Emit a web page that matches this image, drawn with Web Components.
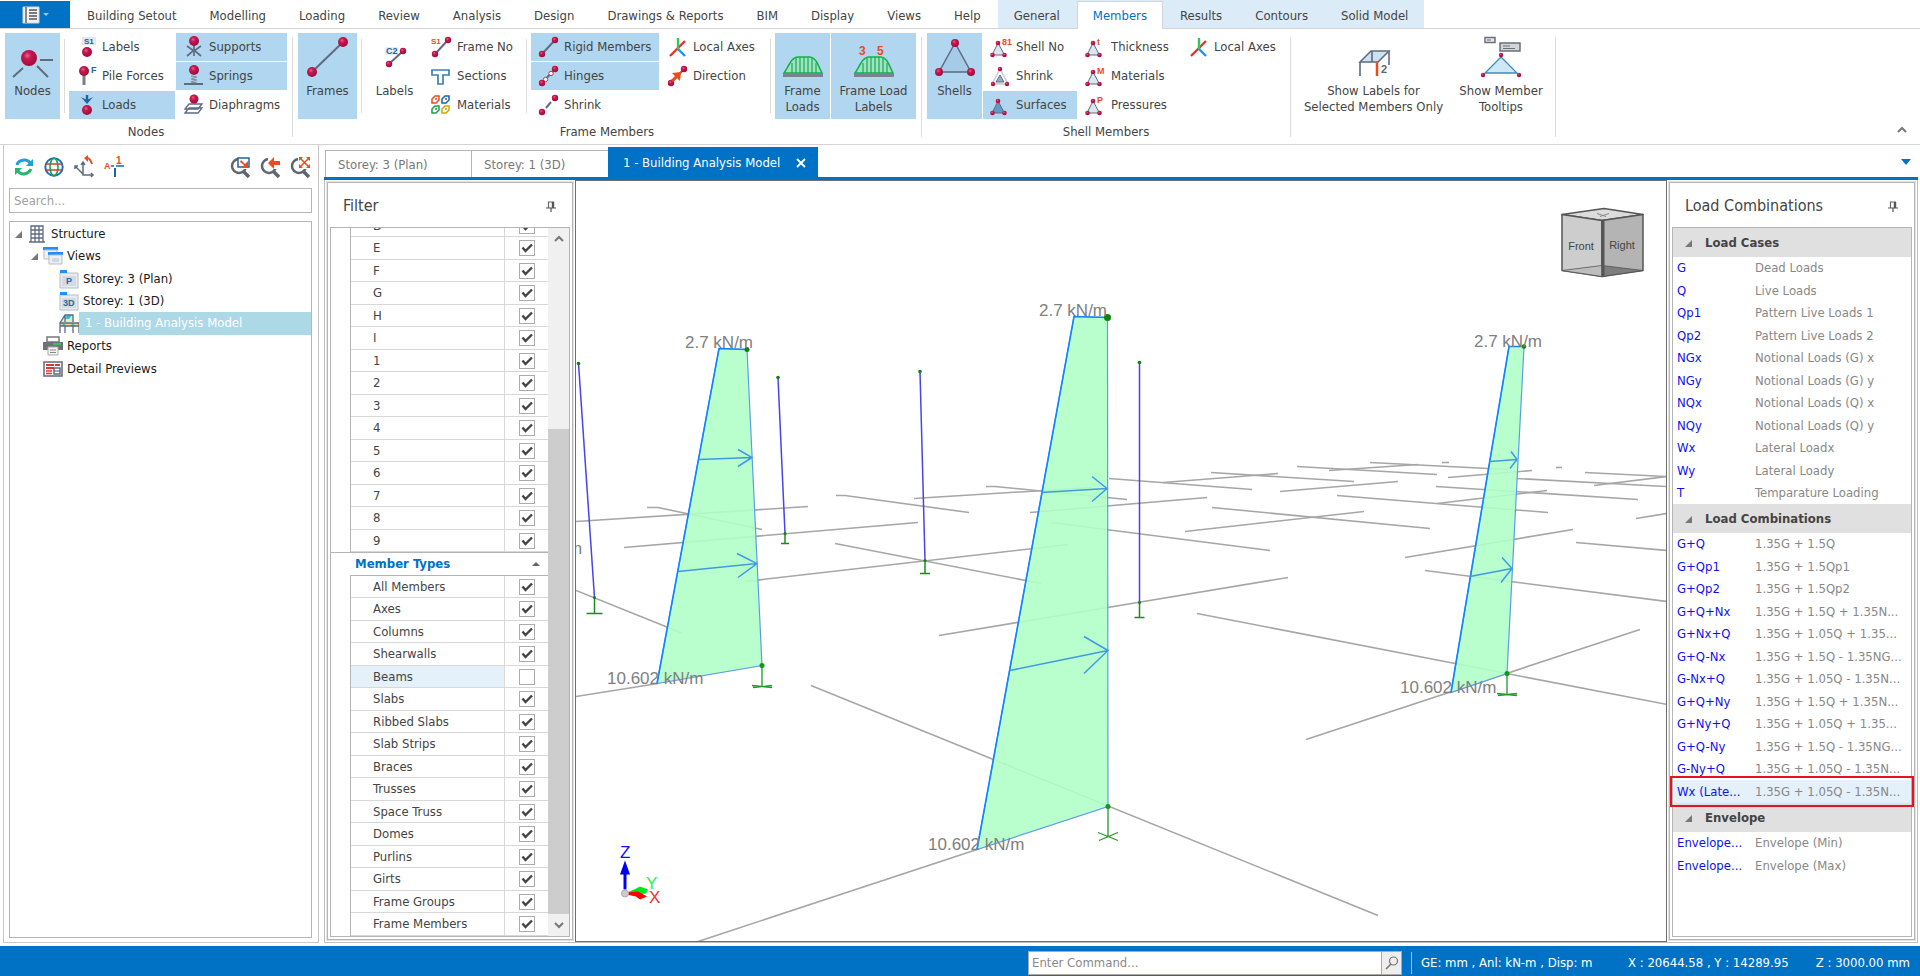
<!DOCTYPE html>
<html lang="en">
<head>
<meta charset="utf-8">
<title>Building Analysis Model</title>
<style>
html, body { margin: 0; height: 100%; }
body { font: 13px/16px "DejaVu Sans Condensed", "DejaVu Sans", sans-serif; color: #444; background: #fff; }
</style>
</head>
<body>
<analysis-app></analysis-app>
<script>
/* ---------- shared helpers ---------- */
const define = (name, render) => customElements.define(name, class extends HTMLElement {
  connectedCallback() {
    if (this.shadowRoot) return;
    const t = document.createElement('template');
    t.innerHTML = render(this);
    this.attachShadow({ mode: 'open' }).append(t.content.cloneNode(true));
  }
});

const RESET = `
  *, *::before { box-sizing: border-box; }
  button, input { font: inherit; color: inherit; background: none; border: 0; padding: 0; margin: 0; border-radius: 0; }
  ul, h2, h3 { margin: 0; padding: 0; list-style: none; font: inherit; }
  a { color: inherit; text-decoration: none; }`;

/* ---------- icons ---------- */
const ball = (x, y, r) => `<circle cx="${x}" cy="${y}" r="${r}" fill="url(#ball)"/>`;
const line = (d, c = '#5f6b80', w = 2) => `<path d="${d}" fill="none" stroke="${c}" stroke-width="${w}"/>`;
const mark = (x, y, t, c = '#f04a1a', s = 9) => `<text x="${x}" y="${y}" font-size="${s}" font-weight="bold" font-family="Liberation Sans, sans-serif" fill="${c}">${t}</text>`;
const member = mid => mid + ball(4, 17, 3.2) + ball(17, 3, 3.2);
const triangle = (fill, t) => `<path d="M8 6L2 18H14.500Z" fill="${fill}" stroke="#5f6b80"/>` + ball(8, 6, 2.3) + ball(2.500, 18, 2.300) + ball(14.500, 18, 2.300) + (t ? mark(12, 8, t) : '');
const loadShape = `<path d="M5 38C9 33 12 22 19 22H31C38 23 39 31 43 38Z" fill="#a4e0c4" stroke="#12b04e" stroke-width="1.500"/>` + line('M13 28V38M17 23V38M21 22V38M25 22V38M29 22V38M33 23V38M37 28V38', '#12b04e', 1.2) + `<path d="M4 38H44V42H4Z" fill="#7b8391"/>`;
const lens = extra => `<circle cx="9" cy="9" r="7" fill="#fff" stroke="#5f666d" stroke-width="2.500"/>` + line('M13 14L19 20', '#5f666d', 3.5) + `<path d="M8 0H21V12H8Z" fill="#fff"/>` + extra;
const windowIcon = t => `<path d="M1 4H19V19H1Z" fill="#e8ecf0" stroke="#b7bdc4"/><path d="M1 1H8V4H1Z" fill="#1e90ff"/><path d="M3 7H17V17H3Z" fill="#d3dae2"/>` + mark(t.length > 1 ? 4 : 7, 15, t, '#2f6798', 9);

const ICONS = {
  nodes: [48, line('M31 25H44M14 33L4 42M28 31L39 42') + ball(20, 23, 8)],
  frames: [48, line('M8 37L39 7') + ball(8, 37, 5) + ball(39, 7, 5)],
  memberLabels: [48, `<path d="M14 12H27V20H14Z" fill="#e9edf2"/>` + line('M18 29L32 16') + ball(18, 29, 3.2) + ball(32, 16, 3.2) + mark(15, 19, 'C2', '#1d64a0')],
  frameLoads: [48, loadShape],
  frameLoadLabels: [48, loadShape + mark(9, 20, '3', '#f04a1a', 12) + mark(27, 20, '5', '#f04a1a', 12)],
  shells: [48, `<path d="M24 8L8 37H40Z" fill="#a6cbe8" stroke="#5f6b80" stroke-width="1.500"/>` + ball(24, 8, 4) + ball(8, 37, 4) + ball(40, 37, 4)],
  selectedLabels: [48, `<path d="M21 16H39L28 27H10Z" fill="#cfe0f0" stroke="#5f6b80" stroke-width="1.500"/>` + line('M10 27V41M22 16V27M39 16V30', '#5f6b80', 1.6) + line('M27 27V41', '#f04a1a', 2.5) + mark(31, 38, '2', '#666', 11)],
  tooltips: [48, `<path d="M8 2.500H18V7.500H8Z" fill="#e2e4e7" stroke="#6b7078" stroke-width="1.500"/><path d="M23 8H43V16H23Z" fill="#d2d5d9" stroke="#6b7078" stroke-width="1.500"/>` + line('M10 5H14M26 11H33M26 13.500H38', '#6b7078', 1.2) + `<path d="M24 22L8 38H40Z" fill="#cfe7f6" stroke="#3a8fb7" stroke-width="1.300"/>` + ball(24, 20, 2.2) + ball(6, 40, 2.2) + ball(42, 40, 2.2)],
  nodeLabels: [20, `<path d="M6 0H20V8H6Z" fill="#e4e7eb"/>` + mark(8, 7, 'S1', '#1d64a0', 8) + ball(11, 15, 5)],
  pile: [20, line('M8 9V19', '#77808f', 3) + ball(8, 5, 5) + mark(15, 7, 'F', '#1d64a0')],
  loads: [20, line('M11 0V6', '#1d64a0', 2.5) + `<path d="M5 2L11 5L17 2L11 9Z" fill="#1d64a0"/>` + ball(11, 15, 5)],
  supports: [20, line('M4 9L11 14L18 9M4 19L11 13L18 19M11 8V19', '#5f6b80', 1.7) + ball(11, 4, 5)],
  springs: [20, line('M8 10L14 11L8 13L14 14L8 16L14 17', '#7d8899', 1.2) + line('M1 18H20') + ball(11, 4, 5)],
  diaphragms: [20, `<path d="M2 18L6 13H19L15 18ZM2 14L6 9H19L15 14Z" fill="#fff" stroke="#5f6b80" stroke-width="1.300"/>` + ball(11, 4, 4.5)],
  frameNo: [20, member(line('M4 17L17 3')) + mark(0, 7, 'S1', '#f04a1a', 8)],
  sections: [20, `<path d="M1 4H18V9H12V18H7V9H1Z" fill="#fff" stroke="#3f7fae" stroke-width="1.700"/>`],
  materials: [20, [['#f04a1a', 0, 0], ['#1d64a0', 10, 0], ['#17a34a', 0, 10], ['#d9a400', 10, 10]].map(([c, x, y]) => `<path transform="translate(${x} ${y})" d="M1 4L4 1H8L8 5L5 8H1Z M4 4H6" fill="#fff" stroke="${c}" stroke-width="1.500"/>`).join('')],
  rigid: [20, member(line('M4 17L17 3'))],
  hinges: [20, member(line('M4 17L17 3') + `<circle cx="7.500" cy="13.500" r="2.200" fill="#fff" stroke="#c73560"/><circle cx="13" cy="7.500" r="2.200" fill="#fff" stroke="#c73560"/>`)],
  shrink: [20, member(line('M8 13L13 7'))],
  axes: [20, line('M3 19L18 4', '#e8322c', 2.4) + line('M11 12L18 19', '#1e90ff', 2.4) + line('M11 1V12', '#35c65a', 2.4)],
  direction: [20, member(line('M4 17L17 3')) + `<path d="M5 7L14 6L13 15L10 12L6 16L4 14L8 10Z" fill="#f04a1a"/>`],
  shellNo: [20, triangle('#dde6ef', '81')],
  thickness: [20, triangle('#dde6ef', 't')],
  shellMaterials: [20, triangle('#dde6ef', 'M')],
  pressures: [20, triangle('#dde6ef', 'P')],
  surfaces: [20, triangle('#5f9bc4', '')],
  shellShrink: [20, `<path d="M10 3L2 18H18Z" fill="#fff" stroke="#c5cad2" stroke-width="1.500"/><path d="M10 9L6 16H14Z" fill="#8fb0cc" stroke="#5f6b80"/>` + ball(10, 3, 2.2) + ball(3, 18, 2.2) + ball(17, 18, 2.2)],
  menu: [20, `<path d="M2 2H18V18H2Z" fill="#f2f2f2" stroke="#d5d5d5"/>` + line('M5 2V18', '#666', 1.5) + line('M8 5H16M8 8H16M8 11H16M8 14H16', '#555', 1.4)],
  refresh: [20, line('M3 8C4 3 13 1 16 6', '#1ea0dc', 3) + `<path d="M19 2V9H12Z" fill="#1ea0dc"/>` + line('M17 12C15 17 7 19 4 14', '#27b573', 3) + `<path d="M1 18V11H8Z" fill="#27b573"/>`],
  globe: [20, `<circle cx="10" cy="10" r="8.700" fill="#fff" stroke="#1d6fb8" stroke-width="2"/>` + line('M2 7H18M2 13H18', '#e8322c', 1.6) + `<ellipse cx="10" cy="10" rx="4" ry="8.700" fill="none" stroke="#17a34a" stroke-width="1.600"/>`],
  rotate: [20, line('M9 6V18H19M9 17L1 9M7 8L9 5L11 8M17 16L19 18L17 20M1 12V9H4', '#5f6b80', 1.5) + line('M13 1C16 1 17 4 18 7', '#f04a1a', 2) + `<path d="M14 -2V5L10 1Z" fill="#f04a1a"/>`],
  axisLabels: [20, mark(0, 12, 'A', '#f04a1a', 9) + mark(12, 7, '1', '#f04a1a', 10) + line('M7 9H10M12 9H20', '#1d64a0', 1.3) + line('M11 11V20', '#1d64a0', 2)],
  zoomWindow: [20, lens(`<path d="M8 1H19V10H8Z" fill="#fff" stroke="#1d64a0" stroke-width="1.500"/><path d="M11 3L15 7L18 4V11H12L14 8L10 5Z" fill="#f04a1a"/>`)],
  zoomBack: [20, lens(`<path d="M8 6L14 0V4H20V8H14V12Z" fill="#f04a1a"/>`)],
  zoomExtents: [20, lens(line('M10 1L19 10M19 1L10 10', '#f04a1a', 1.5) + `<path d="M9 0H13L9 4ZM20 0V4L16 0ZM9 11V7L13 11ZM20 11H16L20 7Z" fill="#f04a1a"/>`)],
  building: [20, line('M4 18V2H16V18M8 2V18M12 2V18M4 6H16M4 10H16M4 14H16M2 18H18', '#5f6b80', 1.3)],
  views: [20, `<path d="M0 1H15V4H0Z" fill="#1e90ff"/><path d="M1 4H14V13H1Z" fill="#eef0f2" stroke="#b7bdc4"/><path d="M5 6H20V9H5Z" fill="#1e90ff"/><path d="M6 9H19V18H6Z" fill="#eef0f2" stroke="#b7bdc4"/><path d="M9 12H16V16H9Z" fill="#d5d8db"/>`],
  plan: [20, windowIcon('P')],
  threeD: [20, windowIcon('3D')],
  model: [20, `<path d="M6 1H15V8H2Z" fill="#d9f0c8"/><path d="M8 1H13L10 5H6Z" fill="#39b8e8"/><path d="M1 9H20V12H1Z" fill="#f6d27c"/><path d="M4 9L8 12H3ZM13 9L17 12H12Z" fill="#39b8e8"/>` + line('M1 19V9L6 1H14V8M1 9H20V19M6 12V19M14 12V19M1 12H20M6 1V8', '#5f6b80', 1.3)],
  printer: [20, `<path d="M4 1H16V6H4Z" fill="#fff" stroke="#777" stroke-width="1.500"/><path d="M0 6H20V14H0Z" fill="#6d7278"/><path d="M10 7H18V9H10Z" fill="#3fbf5a"/><path d="M5 11H15V19H5Z" fill="#f4f4f4" stroke="#aaa"/>` + line('M7 14H13M7 16.500H13', '#888', 1.2)],
  preview: [20, `<path d="M1 3H19V17H1Z" fill="#fff" stroke="#5f6b80" stroke-width="1.500"/>` + line('M3 6H11M3 9H11M12 6H17', '#e8322c', 2) + line('M3 12H9M3 14.500H9', '#e8322c', 1.5) + `<path d="M11 9H17V15H11Z" fill="none" stroke="#5f6b80" stroke-width="1.500"/>` + line('M11 12H17', '#5f6b80', 1.2)],
  pin: [10, line('M2.500 7V1H8', '#666', 1.2) + line('M7 1V7', '#555', 2.4) + line('M0 7H10M5 7V11', '#555', 1.2)],
  search: [16, `<circle cx="9.500" cy="6" r="4" fill="none" stroke="#777" stroke-width="1.200"/>` + line('M7 9L2 14', '#777', 1.6)],
  chevronUp: [12, line('M2 8L6 4L10 8', '#777', 2)],
  chevronDown: [12, line('M2 4L6 8L10 4', '#777', 2)],
  collapse: [10, `<path d="M8 2V9H1Z" fill="#777"/>`],
  triUp: [10, `<path d="M1 7L5 3L9 7Z" fill="#666"/>`],
  triDown: [10, `<path d="M0 2H10L5 8Z" fill="#0072c6"/>`],
  close: [10, line('M1 1L9 9M9 1L1 9', '#fff', 1.8)]
};

define('app-icon', el => {
  const [size, body] = ICONS[el.getAttribute('name')];
  return `<style>:host { display: block; flex: none; width: ${size}px; height: ${size}px; } svg { display: block; overflow: visible; }</style>
  <svg width="${size}" height="${size}" viewBox="0 0 ${size} ${size}" aria-hidden="true">
  <defs><radialGradient id="ball" cx=".4" cy=".35" r=".65"><stop offset="0" stop-color="#e2668c"/><stop offset=".35" stop-color="#c5184f"/><stop offset="1" stop-color="#a30a3c"/></radialGradient></defs>${body}</svg>`;
});

/* ---------- ribbon ---------- */
define('ribbon-tabs', () => {
  const plain = ['Building Setout', 'Modelling', 'Loading', 'Review', 'Analysis', 'Design', 'Drawings &amp; Reports', 'BIM', 'Display', 'Views', 'Help'];
  const context = ['General', 'Members', 'Results', 'Contours', 'Solid Model'];
  return `<style>${RESET}
  :host { display: block; box-sizing: border-box; border-bottom: 1px solid #d4d4d4; height: 29px; }
  nav, .ctx { display: flex; gap: 1px; height: 28px; }
  button { width: 70px; height: 27px; margin-top: 1px; background: #0072c6; display: flex; align-items: center; justify-content: center; gap: 2px; }
  button i { border: 3px solid transparent; border-top: 3px solid #9cc8e8; margin-top: 3px; }
  a { padding: 8px 16px 0; height: 28px; white-space: nowrap; }
  .on { background: #fff; color: #0072c6; margin-top: 1px; padding: 6px 15px 0; border: 1px solid #d4d4d4; border-bottom: 0; }
  .ctx { background: #dcebf8; }
  </style>
  <nav><button aria-label="File menu"><app-icon name="menu"></app-icon><i></i></button>
  ${plain.map(t => `<a href="#">${t}</a>`).join('')}
  <div class="ctx">${context.map(t => `<a href="#"${t === 'Members' ? ' class="on"' : ''}>${t}</a>`).join('')}</div></nav>`;
});

define('ribbon-button', el => {
  const large = el.hasAttribute('large');
  return `<style>${RESET}
  :host { display: block; }
  button { width: 100%; height: 100%; display: flex; white-space: nowrap; text-align: left; }
  .small { align-items: center; gap: 6px; padding: 0 7px; height: 28px; }
  .large { flex-direction: column; align-items: center; padding-top: 2px; text-align: center; }
  .pressed { background: #b1d6f0; }
  </style>
  <button class="${large ? 'large' : 'small'}${el.hasAttribute('pressed') ? ' pressed' : ''}"><app-icon name="${el.getAttribute('icon')}"></app-icon><span><slot></slot></span></button>`;
});

define('ribbon-group', el => `<style>${RESET}
  :host { display: flex; flex-direction: column; position: relative; padding: 4px 6px 0 5px; }
  :host::after { content: ""; position: absolute; right: 0; top: 8px; bottom: 7px; width: 1px; background: #dcdcdc; }
  .items { display: flex; gap: 1px; height: 86px; }
  .caption { text-align: center; padding-top: 5px; height: 25px; }
  ::slotted(.col) { display: grid; grid-auto-rows: 28px; row-gap: 1px; }
  ::slotted(.sep) { width: 1px; background: #dcdcdc; margin: 6px 3px; }
  </style><div class="items"><slot></slot></div><div class="caption">${el.getAttribute('caption') || ''}</div>`);

define('ribbon-bar', () => {
  const large = (icon, text, w, on = true) => `<ribbon-button large ${on ? 'pressed' : ''} icon="${icon}" style="width:${w}px">${text}</ribbon-button>`;
  const col = (w, ...items) => `<div class="col" style="width:${w}px">${items.map(([icon, text, on]) => `<ribbon-button icon="${icon}" ${on ? 'pressed' : ''}>${text}</ribbon-button>`).join('')}</div>`;
  const sep = '<div class="sep"></div>';
  return `<style>${RESET}
  :host { display: flex; box-sizing: border-box; height: 116px; border-bottom: 1px solid #d4d4d4; }
  .fold { margin-left: auto; align-self: flex-end; padding: 0 12px 8px 0; }
  </style>
  <ribbon-group caption="Nodes">
    ${large('nodes', 'Nodes', 55)}${sep}
    ${col(106, ['nodeLabels', 'Labels'], ['pile', 'Pile Forces'], ['loads', 'Loads', 1])}
    ${col(111, ['supports', 'Supports', 1], ['springs', 'Springs', 1], ['diaphragms', 'Diaphragms'])}
  </ribbon-group>
  <ribbon-group caption="Frame Members">
    ${large('frames', 'Frames', 59)}${sep}
    ${large('memberLabels', 'Labels', 57, false)}
    ${col(98, ['frameNo', 'Frame No'], ['sections', 'Sections'], ['materials', 'Materials'])}${sep}
    ${col(128, ['rigid', 'Rigid Members', 1], ['hinges', 'Hinges', 1], ['shrink', 'Shrink'])}
    ${col(106, ['axes', 'Local Axes'], ['direction', 'Direction'])}${sep}
    ${large('frameLoads', 'Frame<br>Loads', 55)}${large('frameLoadLabels', 'Frame Load<br>Labels', 85)}
  </ribbon-group>
  <ribbon-group caption="Shell Members">
    ${large('shells', 'Shells', 55)}
    ${col(94, ['shellNo', 'Shell No'], ['shellShrink', 'Shrink'], ['surfaces', 'Surfaces', 1])}
    ${col(102, ['thickness', 'Thickness'], ['shellMaterials', 'Materials'], ['pressures', 'Pressures'])}
    ${col(104, ['axes', 'Local Axes'])}
  </ribbon-group>
  <ribbon-group>
    ${large('selectedLabels', 'Show Labels for<br>Selected Members Only', 155, false)}
    ${large('tooltips', 'Show Member<br>Tooltips', 98, false)}
  </ribbon-group>
  <button class="fold" aria-label="Collapse ribbon"><app-icon name="chevronUp"></app-icon></button>`;
});

/* ---------- project explorer ---------- */
define('explorer-panel', () => {
  const tree = [[0, 'building', 'Structure', 1], [1, 'views', 'Views', 1], [2, 'plan', 'Storey: 3 (Plan)'], [2, 'threeD', 'Storey: 1 (3D)'], [2, 'model', '1 - Building Analysis Model'], [1, 'printer', 'Reports'], [1, 'preview', 'Detail Previews']];
  const tools = ns => ns.map(n => `<button aria-label="${n}"><app-icon name="${n}"></app-icon></button>`).join('');
  return `<style>${RESET}
  :host { display: flex; flex-direction: column; box-sizing: border-box; width: 316px; border: 1px solid #c8c8c8; border-top: 0; padding: 12px 6px 4px 5px; }
  .tools { display: flex; gap: 10px; padding: 0 2px 0 5px; height: 31px; }
  .tools .gap { flex: 1; }
  .tools button { height: 20px; }
  input { width: 100%; height: 25px; border: 1px solid #b5b5b5; padding: 0 4px; margin-bottom: 8px; }
  input::placeholder { color: #a0a0a0; opacity: 1; }
  ul { flex: 1; border: 1px solid #b5b5b5; color: #1a1a1a; }
  li { display: flex; align-items: center; height: 23px; padding-left: calc(4px + 16px * var(--level)); }
  li:nth-child(even) { height: 22px; }
  .toggle { width: 13px; display: flex; }
  li span { flex: 1; padding-left: 4px; }
  .sel span { background: #add8e6; color: #fff; align-self: stretch; line-height: 22px; padding-left: 6px; }
  </style>
  <div class="tools">${tools(['refresh', 'globe', 'rotate', 'axisLabels'])}<span class="gap"></span>${tools(['zoomWindow', 'zoomBack', 'zoomExtents'])}</div>
  <input type="text" placeholder="Search..." aria-label="Search">
  <ul>${tree.map(([l, i, t, open]) => `<li style="--level:${l}"${i === 'model' ? ' class="sel"' : ''}><div class="toggle">${open ? '<app-icon name="collapse"></app-icon>' : ''}</div><app-icon name="${i}"></app-icon><span>${t}</span></li>`).join('')}</ul>`;
});

/* ---------- document area ---------- */
define('doc-tabs', () => `<style>${RESET}
  :host { display: flex; align-items: flex-end; height: 35px; border-bottom: 3px solid #0072c6; color: #777; padding-left: 1px; box-sizing: border-box; }
  a { height: 27px; padding: 6px 12px 0; width: 147px; border: 1px solid #b5b5b5; border-bottom: 0; white-space: nowrap; }
  a + a { border-left: 0; width: 136px; border-right: 0; }
  a + .on { background: #0072c6; color: #fff; height: 30px; width: 210px; padding: 8px 12px 0 15px; border: 0; display: flex; justify-content: space-between; }
  .on app-icon { margin-top: 3px; }
  button { margin: 0 7px 10px auto; }
  </style>
  <a href="#">Storey: 3 (Plan)</a><a href="#">Storey: 1 (3D)</a><a href="#" class="on"><span>1 - Building Analysis Model</span><app-icon name="close"></app-icon></a>
  <button aria-label="Open views"><app-icon name="triDown"></app-icon></button>`);

define('dock-panel', el => `<style>${RESET}
  :host { display: flex; flex-direction: column; box-sizing: border-box; width: 246px; margin: 2px 0; border: 1px solid #b5b5b5; padding: 2px; min-height: 0; outline: 1px solid #e2e2e2; }
  header { display: flex; align-items: center; justify-content: space-between; height: 42px; flex: none; padding: 0 14px 0 13px; }
  h2 { font-size: 16px; line-height: 20px; }
  .body { flex: 1; min-height: 0; border: 1px solid #b5b5b5; display: flex; flex-direction: column; }
  </style>
  <header><h2>${el.getAttribute('heading')}</h2><button aria-label="Pin panel"><app-icon name="pin"></app-icon></button></header>
  <div class="body"><slot></slot></div>`);

define('filter-list', () => {
  const axes = ['D', 'E', 'F', 'G', 'H', 'I', '1', '2', '3', '4', '5', '6', '7', '8', '9'];
  const types = ['All Members', 'Axes', 'Columns', 'Shearwalls', 'Beams', 'Slabs', 'Ribbed Slabs', 'Slab Strips', 'Braces', 'Trusses', 'Space Truss', 'Domes', 'Purlins', 'Girts', 'Frame Groups', 'Frame Members'];
  const row = t => `<tr${t === 'Beams' ? ' class="hot"' : ''}><th scope="row"><label for="f-${t}">${t}</label></th><td><input type="checkbox" id="f-${t}"${t === 'Beams' ? '' : ' checked'}></td></tr>`;
  return `<style>${RESET}
  :host { display: flex; flex: 1; min-height: 0; overflow: hidden; }
  .view { flex: 1; min-height: 0; display: flex; flex-direction: column; justify-content: flex-end; overflow: hidden; }
  table { flex: none; border-collapse: separate; border-spacing: 0; table-layout: fixed; margin-left: 19px; width: calc(100% - 19px); border-left: 1px solid #b5b5b5; }
  tr { height: 23px; }
  tr:nth-child(odd) { height: 22px; }
  th, td { padding: 0; border-bottom: 1px solid #d8d8d8; font-weight: normal; text-align: left; line-height: 16px; }
  th { padding-left: 22px; }
  td { width: 44px; border-left: 1px solid #d8d8d8; text-align: center; }
  .hot th { background: #e4f0fa; }
  input { appearance: none; width: 16px; height: 16px; border: 1px solid #ababab; display: block; margin: 0 auto; background: #fff; }
  input:checked { background: #fff url('data:image/svg+xml,<svg xmlns="http://www.w3.org/2000/svg" width="14" height="14"><path d="M2.500 6.500L5.500 10L12 3.500" fill="none" stroke="%23444" stroke-width="2.400"/></svg>'); }
  h3 { flex: none; display: flex; align-items: center; justify-content: space-between; height: 23px; padding: 0 7px 0 24px; font-weight: bold; color: #0072c6; border-top: 1px solid #b5b5b5; }
  h3 + table { border-top: 1px solid #b5b5b5; }
  .bar { width: 21px; display: flex; flex-direction: column; background: #f0f0f0; }
  .bar button { height: 22px; display: flex; align-items: center; justify-content: center; }
  .room { flex: 179; } .thumb { flex: 485; background: #cdcdcd; }
  </style>
  <div class="view"><table><tbody>${axes.map(row).join('')}</tbody></table>
  <h3>Member Types<app-icon name="triUp"></app-icon></h3>
  <table><tbody>${types.map(row).join('')}</tbody></table></div>
  <div class="bar"><button aria-label="Scroll up"><app-icon name="chevronUp"></app-icon></button><div class="room"></div><div class="thumb"></div><button aria-label="Scroll down"><app-icon name="chevronDown"></app-icon></button></div>`;
});

define('load-list', () => {
  const groups = [
    ['Load Cases', [['G', 'Dead Loads'], ['Q', 'Live Loads'], ['Qp1', 'Pattern Live Loads 1'], ['Qp2', 'Pattern Live Loads 2'], ['NGx', 'Notional Loads (G) x'], ['NGy', 'Notional Loads (G) y'], ['NQx', 'Notional Loads (Q) x'], ['NQy', 'Notional Loads (Q) y'], ['Wx', 'Lateral Loadx'], ['Wy', 'Lateral Loady'], ['T', 'Temparature Loading']]],
    ['Load Combinations', [['G+Q', '1.35G + 1.5Q'], ['G+Qp1', '1.35G + 1.5Qp1'], ['G+Qp2', '1.35G + 1.5Qp2'], ['G+Q+Nx', '1.35G + 1.5Q + 1.35N...'], ['G+Nx+Q', '1.35G + 1.05Q + 1.35...'], ['G+Q-Nx', '1.35G + 1.5Q - 1.35NG...'], ['G-Nx+Q', '1.35G + 1.05Q - 1.35N...'], ['G+Q+Ny', '1.35G + 1.5Q + 1.35N...'], ['G+Ny+Q', '1.35G + 1.05Q + 1.35...'], ['G+Q-Ny', '1.35G + 1.5Q - 1.35NG...'], ['G-Ny+Q', '1.35G + 1.05Q - 1.35N...'], ['Wx (Late...', '1.35G + 1.05Q - 1.35N...']]],
    ['Envelope', [['Envelope...', 'Envelope (Min)'], ['Envelope...', 'Envelope (Max)']]]
  ];
  return `<style>${RESET}
  :host { display: block; }
  h3 { display: flex; align-items: center; gap: 11px; height: 29px; padding-left: 11px; background: #e0e0e0; font-weight: bold; }
  table { width: 100%; border-collapse: separate; border-spacing: 0; table-layout: fixed; }
  tr { height: 22px; }
  tr:nth-child(even) { height: 23px; }
  td, th { padding: 0; white-space: nowrap; font-weight: normal; text-align: left; }
  th { width: 82px; padding-left: 4px; color: #1010ee; }
  td { color: #888; }
  .picked { position: relative; background: #e4f0fa; }
  .picked th::after { content: ""; position: absolute; inset: -4px -3px; border: 2px solid #e81123; }
  </style>
  ${groups.map(([name, rows]) => `<h3><app-icon name="collapse"></app-icon>${name}</h3><table><tbody>${rows.map(([a, b]) => `<tr${a.startsWith('Wx (') ? ' class="picked"' : ''}><th scope="row">${a}</th><td>${b}</td></tr>`).join('')}</tbody></table>`).join('')}`;
});

/* ---------- 3D view ---------- */
define('model-view', () => {
  const grid = ['576 521 808 506', '647 507 658 507 762 529', '624 547 918 522', '836 495 845 495 969 512', '835 543 1041 583', '745 581 1068 544', '914 498 1092 487', '986 486 995 486 1127 499', '1030 512 1207 497', '1051 522 1270 550', '939 635 1288 577', '576 590 683 633', '576 696 658 683', '811 685 1378 915', '698 941 977 849', '1109 478 1252 489', '1163 482 1278 473', '1211 472 1354 481', '1280 491 1398 481', '1297 466 1437 474', '1329 470 1418 464', '1370 462 1508 469', '1442 462 1449 462', '1448 477 1532 470', '1556 467 1562 467', '1585 472 1667 476', '1516 478 1667 486', '1594 485 1667 476', '1436 486 1638 499', '1437 503 1547 490', '1337 495 1548 512', '1212 507 1430 528', '1185 531 1364 511', '1405 557 1573 529', '1636 518 1667 513', '1576 542 1667 550', '1425 570 1667 601', '1197 613 1667 704', '1306 739 1640 629'];
  const posts = [[578.5, 363, 594.5, 597, 613, 8], [778, 377, 785, 533, 543, 4], [920, 371, 925, 560, 573, 5], [1139.5, 362, 1139.5, 602, 617, 5]];
  const walls = [
    { s: '719 348 747 349 762 665 657 683', arrows: ['699 459 752 457M738 449L752 457L738 466', '678 571 757 563M737 553L757 563L738 577'], top: [747, 349, 2.5], foot: [762, 665, 686, 1] },
    { s: '1074 316 1107.500 317 1108 806 977 849', arrows: ['1041 492 1107 488M1092 476L1107 488L1092 501', '1010 670 1108 650M1084 636L1108 650L1084 673'], top: [1107.5, 317, 3.5], foot: [1108, 806, 836, 4] },
    { s: '1509 346 1524 346 1507 673 1451 692', arrows: ['1490 461 1517 459M1511 451L1517 459L1510 468', '1470 576 1512 568M1502 557L1512 568L1501 582'], top: [1524, 346, 2.2], foot: [1507, 673, 694, 1] }
  ];
  const label = (x, y, t, c = '#808080') => `<text x="${x}" y="${y}" fill="${c}">${t}</text>`;
  return `<style>
  :host { display: block; position: relative; flex: 1; min-width: 0; border: 1px solid #6e6e6e; background: #fff; overflow: hidden; }
  svg { position: absolute; inset: 0; width: 100%; height: 100%; font: 17px "Liberation Sans", Arial, sans-serif; }
  .cube text { font-size: 11px; fill: #444; text-anchor: middle; }
  </style>
  <svg viewBox="576 180 1090 761" preserveAspectRatio="xMidYMid slice" role="img" aria-label="Building analysis model">
  <g fill="none" stroke="#a6a6a6" stroke-width="1.600">${grid.map(p => `<polyline points="${p}"/>`).join('')}</g>
  <g fill="none">${posts.map(([x1, y1, x2, y2, y3, r]) => `<path d="M${x1} ${y1}L${x2} ${y2}" stroke="#4a42ea" stroke-width="1.500"/><path d="M${x2} ${y2}V${y3}M${x2 - r} ${y3}H${x2 + r}" stroke="#1d8a1d" stroke-width="1.500"/><circle cx="${x1}" cy="${y1}" r="1.800" fill="#118011"/><circle cx="${x2}" cy="${y2}" r="1.500" fill="#118011"/>`).join('')}</g>
  ${label(568, 553, 'm')}
  ${walls.map(w => {
    const p = w.s.split(' ');
    const [fx, fy, by, d] = w.foot;
    return `<polygon points="${w.s}" fill="#b0ffc8" fill-opacity=".9" stroke="#5c9cf0" stroke-width="1.200"/>
    <path d="M${p[2]} ${p[3]}L${p[0]} ${p[1]}L${p[6]} ${p[7]}" fill="none" stroke="#1284ff" stroke-width="1.600"/>
    ${w.arrows.map(a => `<path d="M${a}" fill="none" stroke="#3f9ae6" stroke-width="1.500"/>`).join('')}
    <path d="M${fx} ${fy}V${by}M${fx - 9} ${by + d}L${fx + 10} ${by - d}M${fx - 10} ${by - d}L${fx + 10} ${by + d}" stroke="#1f9a2a" stroke-width="1.300" fill="none"/>
    <circle cx="${w.top[0]}" cy="${w.top[1]}" r="${w.top[2]}" fill="#0c830c"/><circle cx="${fx}" cy="${fy}" r="2.500" fill="#0f9a1a"/>`;
  }).join('')}
  ${label(685, 347, '2.7 kN/m')}${label(1039, 315, '2.7 kN/m')}${label(1474, 346, '2.7 kN/m')}
  ${label(607, 683, '10.602 kN/m')}${label(928, 849, '10.602 kN/m')}${label(1400, 692, '10.602 kN/m')}
  <path d="M625 889V868" stroke="#0000f0" stroke-width="3"/><path d="M625 860L630 874H620Z" fill="#0000f0"/>
  <path d="M627 892L634 889L640 886L648 889L646 893L636 894Z" fill="#00e81c"/><path d="M626 892L638 891L647 896L640 899L636 896L626 894Z" fill="#f00"/>
  <circle cx="625" cy="893" r="3.500" fill="#ccc" stroke="#aaa"/>
  ${label(620, 857, 'Z', '#1010ff')}${label(646, 888, 'Y', '#2df04a')}${label(649, 902, 'X', '#ff2a2a')}
  <g class="cube" stroke="#555" stroke-width="1.500" stroke-linejoin="round">
  <path d="M1562 214L1604 208L1643 214L1602 220Z" fill="#dcdcdc"/><path d="M1562 214L1602 220V276L1562 270Z" fill="#cdcdcd"/><path d="M1602 220L1643 214V270L1602 276Z" fill="#b4b4b4"/>
  <path d="M1562 270L1602 265V276Z" fill="#bdbdbd" stroke-width=".800"/><path d="M1602 265L1643 270L1602 276Z" fill="#7d7d7d" stroke-width=".800"/><path d="M1603 220V276" stroke-width="3"/>
  <path d="M1597 213L1606 216M1600 216L1609 213" stroke="#888" stroke-width="1"/>
  <g stroke="none"><text x="1581" y="249">Front</text><text x="1622" y="248">Right</text></g></g>
  </svg>`;
});

/* ---------- status bar ---------- */
define('status-bar', () => `<style>${RESET}
  :host { display: flex; box-sizing: border-box; height: 30px; flex: none; background: #0072c6; color: #fff; align-items: center; justify-content: flex-end; padding: 5px 10px 1px 0; }
  .cmd { display: flex; width: 374px; height: 24px; background: #fff; border: 1px solid #aaa; }
  input { flex: 1; min-width: 0; padding: 0 3px; color: #444; }
  input::placeholder { color: #8a8a8a; opacity: 1; }
  button { width: 20px; display: flex; align-items: center; justify-content: center; background: #eee; border-left: 1px solid #aaa; }
  .units { border-left: 1px solid #8fc3ea; margin-left: 9px; padding-left: 9px; line-height: 22px; flex: 0 0 217px; }
  .pos { flex: 0 0 187px; } .z { flex: 0 0 95px; text-align: right; }
  span { white-space: nowrap; }
  </style>
  <div class="cmd"><input type="text" placeholder="Enter Command..." aria-label="Command"><button aria-label="Run command"><app-icon name="search"></app-icon></button></div>
  <span class="units">GE: mm , Anl: kN-m , Disp: m</span><span class="pos">X : 20644.58 , Y : 14289.95</span><span class="z">Z : 3000.00 mm</span>`);

/* ---------- application shell ---------- */
define('analysis-app', () => `<style>${RESET}
  :host { display: flex; flex-direction: column; height: 100vh; }
  ribbon-tabs, ribbon-bar { flex: none; }
  main { flex: 1; min-height: 0; display: flex; gap: 5px; padding: 0 2px 3px 3px; }
  .docs { flex: 1; min-width: 0; min-height: 0; display: flex; flex-direction: column; }
  doc-tabs { flex: none; }
  .stage { flex: 1; min-height: 0; display: flex; gap: 2px; padding: 0 2px; border: 1px solid #bdbdbd; border-top: 0; }
  </style>
  <ribbon-tabs></ribbon-tabs><ribbon-bar></ribbon-bar>
  <main><explorer-panel></explorer-panel>
    <div class="docs"><doc-tabs></doc-tabs>
      <div class="stage"><dock-panel heading="Filter"><filter-list></filter-list></dock-panel><model-view></model-view><dock-panel heading="Load Combinations"><load-list></load-list></dock-panel></div>
    </div></main>
  <status-bar></status-bar>`);
</script>
</body>
</html>
